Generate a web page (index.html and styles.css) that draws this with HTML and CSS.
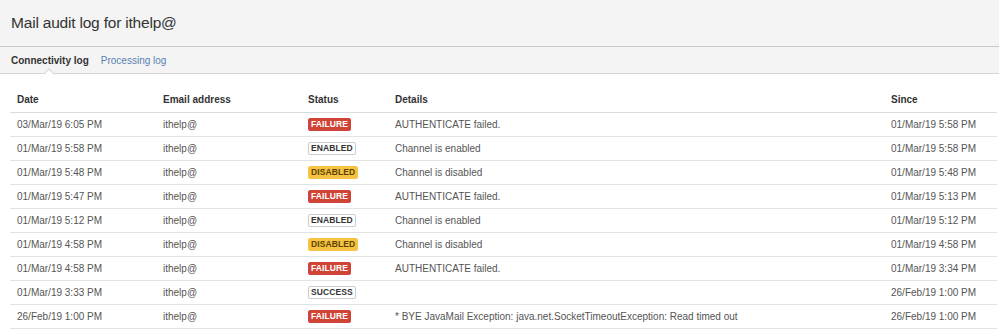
FILE: index.html
```html
<!DOCTYPE html>
<html>
<head>
<meta charset="utf-8">
<link rel="stylesheet" href="styles.css">
</head>
<body>
<header class="page-head">
  <h1 class="title">Mail audit log for ithelp@</h1>
</header>
<nav class="tabs">
  <span class="tab active">Connectivity log</span>
  <span class="tab link">Processing log</span>
</nav>
<main class="content">
  <table class="log">
    <colgroup>
      <col class="c-date"><col class="c-email"><col class="c-status"><col class="c-details"><col class="c-since">
    </colgroup>
    <thead>
      <tr><th>Date</th><th>Email address</th><th>Status</th><th>Details</th><th>Since</th></tr>
    </thead>
    <tbody>
      <tr><td>03/Mar/19 6:05 PM</td><td>ithelp@</td><td><span class="loz fail">FAILURE</span></td><td>AUTHENTICATE failed.</td><td>01/Mar/19 5:58 PM</td></tr>
      <tr><td>01/Mar/19 5:58 PM</td><td>ithelp@</td><td><span class="loz plain">ENABLED</span></td><td>Channel is enabled</td><td>01/Mar/19 5:58 PM</td></tr>
      <tr><td>01/Mar/19 5:48 PM</td><td>ithelp@</td><td><span class="loz warn">DISABLED</span></td><td>Channel is disabled</td><td>01/Mar/19 5:48 PM</td></tr>
      <tr><td>01/Mar/19 5:47 PM</td><td>ithelp@</td><td><span class="loz fail">FAILURE</span></td><td>AUTHENTICATE failed.</td><td>01/Mar/19 5:13 PM</td></tr>
      <tr><td>01/Mar/19 5:12 PM</td><td>ithelp@</td><td><span class="loz plain">ENABLED</span></td><td>Channel is enabled</td><td>01/Mar/19 5:12 PM</td></tr>
      <tr><td>01/Mar/19 4:58 PM</td><td>ithelp@</td><td><span class="loz warn">DISABLED</span></td><td>Channel is disabled</td><td>01/Mar/19 4:58 PM</td></tr>
      <tr><td>01/Mar/19 4:58 PM</td><td>ithelp@</td><td><span class="loz fail">FAILURE</span></td><td>AUTHENTICATE failed.</td><td>01/Mar/19 3:34 PM</td></tr>
      <tr><td>01/Mar/19 3:33 PM</td><td>ithelp@</td><td><span class="loz plain">SUCCESS</span></td><td></td><td>26/Feb/19 1:00 PM</td></tr>
      <tr><td>26/Feb/19 1:00 PM</td><td>ithelp@</td><td><span class="loz fail">FAILURE</span></td><td>* BYE JavaMail Exception: java.net.SocketTimeoutException: Read timed out</td><td>26/Feb/19 1:00 PM</td></tr>
    </tbody>
  </table>
</main>
</body>
</html>
```
FILE: styles.css
```css
* { box-sizing: border-box; }
html, body { margin: 0; padding: 0; background: #fff; }
body { font-family: "Liberation Sans", Arial, sans-serif; color: #333; }

.page-head {
  height: 47px;
  background: #f4f4f4;
  border-bottom: 1px solid #c9c9c9;
  display: flex;
  align-items: center;
  padding: 0 11px;
}
.title {
  margin: 0;
  font-size: 15.5px;
  font-weight: normal;
  letter-spacing: -0.2px;
  color: #333;
  padding-bottom: 1px;
}

.tabs {
  position: relative;
  height: 27px;
  background: #f4f4f4;
  border-bottom: 1px solid #d6d6d6;
  display: flex;
  align-items: center;
  gap: 12px;
  padding: 0 11px;
  font-size: 10px;
}
.tab.active { font-weight: bold; color: #333; position: relative; height: 100%; display: flex; align-items: center; }
.tab.active::after {
  content: "";
  position: absolute;
  left: 34px;
  bottom: -5px;
  width: 7px;
  height: 7px;
  background: #fff;
  border-left: 1px solid #d6d6d6;
  border-top: 1px solid #d6d6d6;
  transform: rotate(45deg);
}
.tab.link { color: #5b7fae; }

.content { padding: 14px 2px 0 10px; }

.log {
  width: 100%;
  border-collapse: collapse;
  table-layout: fixed;
  font-size: 10px;
}
.c-date { width: 146px; }
.c-email { width: 145px; }
.c-status { width: 87px; }
.c-details { width: 496px; }
.c-since { width: auto; }

.log th {
  text-align: left;
  font-weight: bold;
  color: #333;
  height: 24px;
  padding: 0 7px;
  border-bottom: 1px solid #dcdcdc;
}
.log td {
  height: 24px;
  padding: 0 7px;
  border-bottom: 1px solid #e2e2e2;
  color: #555;
  white-space: nowrap;
}

.loz {
  display: inline-block;
  font-size: 8.5px;
  font-weight: bold;
  line-height: 9px;
  padding: 1px 2px;
  border-radius: 2px;
  vertical-align: middle;
  letter-spacing: 0.1px;
}
.loz.fail { background: #d04437; color: #fff; border: 1px solid #d04437; }
.loz.warn { background: #f6c342; color: #594300; border: 1px solid #f6c342; }
.loz.plain { background: #fff; color: #333; border: 1px solid #ccc; }
```
